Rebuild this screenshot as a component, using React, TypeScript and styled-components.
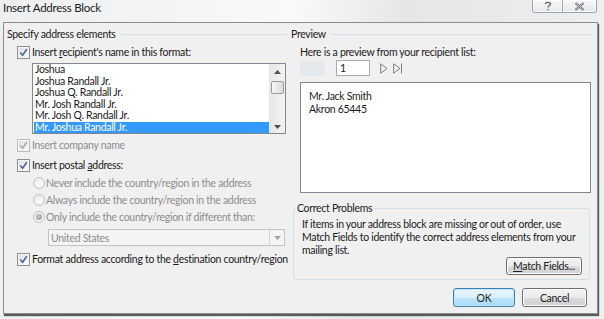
import React from 'react';
import styled, { createGlobalStyle } from 'styled-components';

const GlobalStyle = createGlobalStyle`
  html, body {
    margin: 0;
    padding: 0;
    background: #e9ecef;
  }
  body {
    font-family: Lato, 'Noto Sans', sans-serif;
    font-size: 10.5px;
    letter-spacing: -0.3px;
    color: #1b1b1b;
  }
`;

const Window = styled.div`
  width: 604px;
  height: 319px;
  overflow: hidden;
  display: flex;
  flex-direction: column;
  background: linear-gradient(100deg, #eceef0 0%, #f8f9fa 45%, #e4e6e8 62%, #eef0f1 100%);
`;

const TitleBar = styled.div`
  height: 22px;
  flex: none;
  display: flex;
  align-items: flex-start;
  justify-content: space-between;
  padding: 0 7px 0 3px;
`;

const Title = styled.div`
  font-size: 11.5px;
  letter-spacing: -0.25px;
  line-height: 16px;
  color: #1a1a1a;
`;

const CaptionButtons = styled.div`
  display: flex;
  margin-top: -1px;
`;

const CaptionButton = styled.div<{ $w: number; $last?: boolean }>`
  width: ${(p) => p.$w}px;
  height: 14px;
  box-sizing: border-box;
  border: 1px solid #9da3aa;
  border-left: ${(p) => (p.$last ? 'none' : '1px solid #9da3aa')};
  border-radius: ${(p) => (p.$last ? '0 0 3px 0' : '0 0 0 3px')};
  background: linear-gradient(#f6f7f8, #e6e8ea);
  box-shadow: inset 0 0 0 1px rgba(255, 255, 255, 0.7);
  display: flex;
  align-items: center;
  justify-content: center;
`;

const Panel = styled.div`
  margin: 0 6px 0 3px;
  height: 292px;
  box-sizing: border-box;
  border: 1px solid #8c8c8c;
  background: #f0f0f0;
  box-shadow: 1px 2px 1px rgba(40, 40, 40, 0.75);
  display: grid;
  grid-template-columns: 280px 1fr;
  column-gap: 3px;
  padding: 0 5px 0 3px;
`;

const Column = styled.div`
  display: flex;
  flex-direction: column;
  min-width: 0;
`;

const GroupHeading = styled.div<{ $indent?: number }>`
  height: 14px;
  margin-top: 4px;
  padding-left: ${(p) => p.$indent || 0}px;
  display: flex;
  align-items: center;
  white-space: nowrap;
  &::after {
    content: '';
    flex: 1;
    height: 1px;
    margin-left: 5px;
    background: #d5dfe5;
  }
`;

const Row = styled.div<{ $top: number; $indent: number; $disabled?: boolean }>`
  height: 16px;
  margin-top: ${(p) => p.$top}px;
  padding-left: ${(p) => p.$indent}px;
  display: flex;
  align-items: center;
  gap: 2px;
  white-space: nowrap;
  color: ${(p) => (p.$disabled ? '#8d8d8d' : '#1b1b1b')};
`;

const Box = styled.span<{ $disabled?: boolean }>`
  width: 13px;
  height: 13px;
  flex: none;
  box-sizing: border-box;
  border: 1px solid ${(p) => (p.$disabled ? '#bcbcbc' : '#8e8f8f')};
  background: linear-gradient(135deg, #dcdee2, #fbfbfb);
  box-shadow: inset 0 0 0 1px #f6f6f6;
  display: flex;
  align-items: center;
  justify-content: center;
`;

const Check: React.FC<{ disabled?: boolean }> = ({ disabled }) => (
  <Box $disabled={disabled}>
    <svg width="9" height="9" viewBox="0 0 9 9">
      <path
        d="M1.3 4.6 L3.6 7.2 L7.8 1.3"
        fill="none"
        stroke={disabled ? '#a8a8a8' : '#4a5f97'}
        strokeWidth="1.5"
      />
    </svg>
  </Box>
);

const Radio = styled.span<{ $on?: boolean }>`
  width: 12px;
  height: 12px;
  flex: none;
  box-sizing: border-box;
  border-radius: 50%;
  border: 1px solid #c2c2c2;
  margin-right: -1px;
  background: radial-gradient(circle at 60% 65%, #fcfcfc, #e3e4e6);
  display: flex;
  align-items: center;
  justify-content: center;
  &::after {
    content: '';
    display: ${(p) => (p.$on ? 'block' : 'none')};
    width: 6px;
    height: 6px;
    border-radius: 50%;
    background: radial-gradient(circle at 40% 40%, #c8c8c8, #8e8e8e);
  }
`;

const ListBox = styled.div`
  margin: 3px 0 0 25px;
  width: 254px;
  height: 71px;
  box-sizing: border-box;
  border: 1px solid #828790;
  background: #fff;
  display: flex;
`;

const Items = styled.div`
  flex: 1;
  padding-left: 1px;
`;

const Item = styled.div<{ $selected?: boolean }>`
  height: 11.5px;
  line-height: 11.5px;
  padding-left: 1px;
  white-space: nowrap;
  background: ${(p) => (p.$selected ? '#3399ff' : 'transparent')};
  color: ${(p) => (p.$selected ? '#fff' : '#1b1b1b')};
`;

const ScrollBar = styled.div`
  width: 16px;
  flex: none;
  background: linear-gradient(90deg, #e6e6e6, #f3f3f3);
  display: flex;
  flex-direction: column;
  align-items: center;
  padding: 6px 0 4px;
  box-sizing: border-box;
`;

const Thumb = styled.div`
  width: 13px;
  height: 13px;
  margin-top: 7px;
  box-sizing: border-box;
  border: 1px solid #9b9b9b;
  border-radius: 2px;
  background: linear-gradient(90deg, #f6f6f6, #dcdcdc);
`;

const Spacer = styled.div`
  flex: 1;
`;

const Combo = styled.div`
  margin: 4px 0 0 41px;
  width: 237px;
  height: 17px;
  box-sizing: border-box;
  border: 1px solid #c4c4c4;
  background: #f4f4f4;
  color: #8d8d8d;
  display: flex;
  align-items: center;
  padding-left: 2px;
`;

const ComboButton = styled.div`
  margin-left: auto;
  width: 15px;
  height: 15px;
  box-sizing: border-box;
  border-left: 1px solid #d4d4d4;
  display: flex;
  align-items: center;
  justify-content: center;
`;

const NavRow = styled.div`
  height: 16px;
  padding-left: 10px;
  display: flex;
  align-items: center;
`;

const NavGhost = styled.div`
  width: 25px;
  height: 15px;
  background: #e4e9ee;
  margin-right: 11px;
`;

const Counter = styled.div`
  width: 34px;
  height: 16px;
  box-sizing: border-box;
  border: 1px solid #abadb3;
  background: #fff;
  padding-left: 3px;
  line-height: 14px;
  margin-right: 10px;
`;

const NavIcon = styled.svg`
  margin-right: 5px;
`;

const PreviewBox = styled.div`
  margin: 6px 0 0 10px;
  width: 291px;
  height: 111px;
  box-sizing: border-box;
  border: 1px solid #828790;
  background: #fff;
  padding: 7px 0 0 8px;
  line-height: 13px;
`;

const Fieldset = styled.fieldset`
  margin: 8px 0 0 3px;
  width: 297px;
  box-sizing: border-box;
  border: 1px solid #d5dfe5;
  border-radius: 3px;
  padding: 0 7px 4px 8px;
  display: flex;
  flex-direction: column;
`;

const Legend = styled.legend`
  padding: 0 1px;
  margin-left: -6px;
  line-height: 14px;
`;

const Paragraph = styled.p`
  margin: 3px 0 0 0;
  line-height: 13px;
  white-space: nowrap;
`;

const Button = styled.button<{ $w: number; $h: number; $default?: boolean }>`
  width: ${(p) => p.$w}px;
  height: ${(p) => p.$h}px;
  padding: 0;
  font: inherit;
  letter-spacing: inherit;
  color: #1b1b1b;
  border-radius: 3px;
  border: 1px solid ${(p) => (p.$default ? '#3c7fb1' : '#707070')};
  background: ${(p) =>
    p.$default
      ? 'linear-gradient(#eaf6fd 0%, #d9f0fc 50%, #bee6fd 51%, #a7d9f5 100%)'
      : 'linear-gradient(#f2f2f2 0%, #ebebeb 50%, #dddddd 51%, #cfcfcf 100%)'};
  box-shadow: inset 0 0 0 1px ${(p) => (p.$default ? '#c4e5f6' : '#fcfcfc')};
`;

const MatchButton = styled(Button)`
  align-self: flex-end;
  margin-top: 0;
`;

const ButtonRow = styled.div`
  margin: 8px 5px 0 0;
  display: flex;
  justify-content: flex-end;
  gap: 7px;
`;

export default function App() {
  return (
    <Window>
      <GlobalStyle />
      <TitleBar>
        <Title>Insert Address Block</Title>
        <CaptionButtons>
          <CaptionButton $w={31}>
            <svg width="8" height="10" viewBox="0 0 8 10">
              <path
                d="M1.5 3 C1.5 0.8 6.5 0.8 6.5 3 C6.5 4.6 4 4.6 4 6.5 M4 8 L4 9.3"
                fill="none"
                stroke="#5c6168"
                strokeWidth="1.3"
              />
            </svg>
          </CaptionButton>
          <CaptionButton $w={34} $last>
            <svg width="11" height="9" viewBox="0 0 11 9">
              <path d="M1.5 1 L9.5 8 M9.5 1 L1.5 8" stroke="#5c6168" strokeWidth="2.2" />
              <path d="M1.5 1 L9.5 8 M9.5 1 L1.5 8" stroke="#eef0f2" strokeWidth="0.8" />
            </svg>
          </CaptionButton>
        </CaptionButtons>
      </TitleBar>

      <Panel>
        <Column>
          <GroupHeading>Specify address elements</GroupHeading>
          <Row $top={3} $indent={10}>
            <Check />
            <span>
              Insert <u>r</u>ecipient's name in this format:
            </span>
          </Row>
          <ListBox>
            <Items>
              <Item>Joshua</Item>
              <Item>Joshua Randall Jr.</Item>
              <Item>Joshua Q. Randall Jr.</Item>
              <Item>Mr. Josh Randall Jr.</Item>
              <Item>Mr. Josh Q. Randall Jr.</Item>
              <Item $selected>Mr. Joshua Randall Jr.</Item>
            </Items>
            <ScrollBar>
              <svg width="7" height="4" viewBox="0 0 7 4">
                <path d="M0 4 L3.5 0 L7 4 Z" fill="#4d4d4d" />
              </svg>
              <Thumb />
              <Spacer />
              <svg width="7" height="4" viewBox="0 0 7 4">
                <path d="M0 0 L3.5 4 L7 0 Z" fill="#4d4d4d" />
              </svg>
            </ScrollBar>
          </ListBox>
          <Row $top={3} $indent={10} $disabled>
            <Check disabled />
            <span>Insert company name</span>
          </Row>
          <Row $top={4} $indent={10}>
            <Check />
            <span>
              Insert postal <u>a</u>ddress:
            </span>
          </Row>
          <Row $top={2} $indent={26} $disabled>
            <Radio />
            <span>Never include the country/region in the address</span>
          </Row>
          <Row $top={1} $indent={26} $disabled>
            <Radio />
            <span>Always include the country/region in the address</span>
          </Row>
          <Row $top={1} $indent={26} $disabled>
            <Radio $on />
            <span>Only include the country/region if different than:</span>
          </Row>
          <Combo>
            United States
            <ComboButton>
              <svg width="7" height="4" viewBox="0 0 7 4">
                <path d="M0 0 L3.5 4 L7 0 Z" fill="#a5a5a5" />
              </svg>
            </ComboButton>
          </Combo>
          <Row $top={5} $indent={10}>
            <Check />
            <span>
              Format address according to the <u>d</u>estination country/region
            </span>
          </Row>
        </Column>

        <Column>
          <GroupHeading $indent={1}>Preview</GroupHeading>
          <Row $top={3} $indent={10}>
            <span>Here is a preview from your recipient list:</span>
          </Row>
          <NavRow>
            <NavGhost />
            <Counter>1</Counter>
            <NavIcon width="8" height="11" viewBox="0 0 8 11">
              <path d="M0.7 0.8 L7 5.5 L0.7 10.2 Z" fill="none" stroke="#7d7d7d" strokeWidth="1" />
            </NavIcon>
            <NavIcon width="10" height="11" viewBox="0 0 10 11">
              <path d="M0.7 0.8 L7 5.5 L0.7 10.2 Z" fill="none" stroke="#7d7d7d" strokeWidth="1" />
              <path d="M8.5 0.5 L8.5 10.5" stroke="#7d7d7d" strokeWidth="1" />
            </NavIcon>
          </NavRow>
          <PreviewBox>
            <div>Mr. Jack Smith</div>
            <div>Akron 65445</div>
          </PreviewBox>
          <Fieldset>
            <Legend>Correct Problems</Legend>
            <Paragraph>
              If items in your address block are missing or out of order, use
              <br />
              Match Fields to identify the correct address elements from your
              <br />
              mailing list.
            </Paragraph>
            <MatchButton $w={76} $h={18}>
              <u>M</u>atch Fields...
            </MatchButton>
          </Fieldset>
          <ButtonRow>
            <Button $w={62} $h={19} $default>
              OK
            </Button>
            <Button $w={65} $h={19}>
              Cancel
            </Button>
          </ButtonRow>
        </Column>
      </Panel>
    </Window>
  );
}
